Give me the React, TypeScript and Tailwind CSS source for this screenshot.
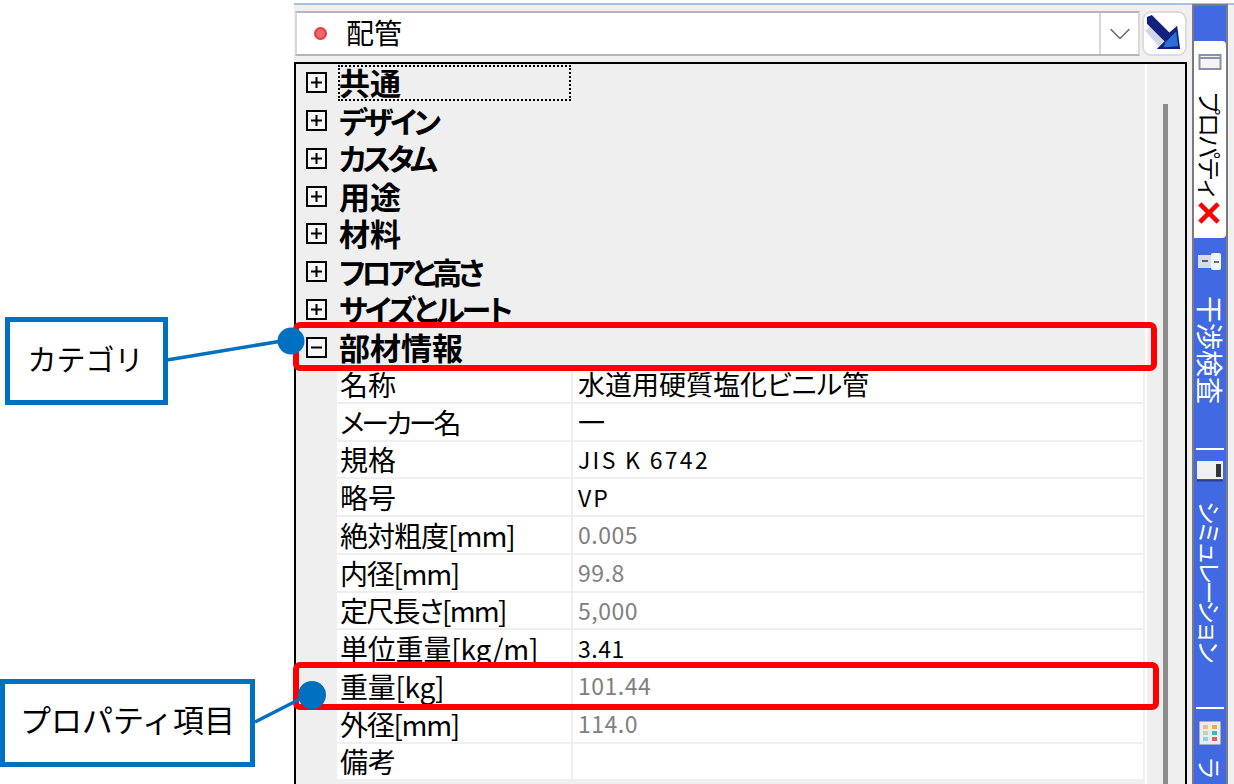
import { ChevronDown } from 'lucide-react';

const categories = [
  { name: '共通', cls: 'text-[31px]' },
  { name: 'デザイン', cls: 'text-[30px] tracking-[-3.5px]' },
  { name: 'カスタム', cls: 'text-[30px] tracking-[-4px]' },
  { name: '用途', cls: 'text-[31px]' },
  { name: '材料', cls: 'text-[31px]' },
  { name: 'フロアと高さ', cls: 'text-[30px] tracking-[-4px]' },
  { name: 'サイズとルート', cls: 'text-[30px] tracking-[-3px]' },
];

const props = [
  { name: '名称', value: '水道用硬質塩化ビニル管', jp: true, valueCls: 'tracking-[0px]' },
  { name: 'メーカー名', value: '一', jp: true, nameCls: 'tracking-[-3px]' },
  { name: '規格', value: 'JIS K 6742', valueCls: 'tracking-[2.3px]' },
  { name: '略号', value: 'VP', valueCls: 'tracking-[2px]' },
  { name: '絶対粗度[mm]', value: '0.005', gray: true, nameCls: 'tracking-[-1px]' },
  { name: '内径[mm]', value: '99.8', gray: true, nameCls: 'tracking-[-1.3px]' },
  { name: '定尺長さ[mm]', value: '5,000', gray: true, nameCls: 'tracking-[-1.75px]' },
  { name: '単位重量[kg/m]', value: '3.41', nameCls: 'tracking-[-0.2px]' },
  { name: '重量[kg]', value: '101.44', gray: true, nameCls: 'tracking-[-0.3px]' },
  { name: '外径[mm]', value: '114.0', gray: true, nameCls: 'tracking-[-1.3px]' },
  { name: '備考', value: '' },
];

function ExpandBox({ open }: { open?: boolean }) {
  return (
    <svg width="21" height="21" viewBox="0 0 21 21" className="ml-[10px] shrink-0">
      <rect x="1" y="1" width="19" height="19" fill="#f8f8f8" stroke="#000" strokeWidth="2" />
      <path d={open ? 'M5 10.5h11' : 'M5 10.5h11M10.5 5v11'} stroke="#000" strokeWidth="2" />
    </svg>
  );
}

function TabIcon({ kind }: { kind: 'window' | 'key' | 'side' | 'grid' }) {
  if (kind === 'window') {
    return (
      <svg width="24" height="18" viewBox="0 0 24 18">
        <rect x="1.5" y="2" width="21" height="14" fill="#f4f4f8" stroke="#8a90a8" strokeWidth="2" />
        <path d="M2 5h20" stroke="#8a90a8" strokeWidth="2" />
      </svg>
    );
  }
  if (kind === 'key') {
    return (
      <svg width="26" height="20" viewBox="0 0 26 20">
        <rect x="1" y="3" width="14" height="13" fill="#d8dce8" />
        <rect x="14" y="1" width="10" height="17" rx="2" fill="#f2f4f8" />
        <path d="M17 10h5" stroke="#6a7080" strokeWidth="2" />
        <path d="M5 9h6" stroke="#5a6070" strokeWidth="2" />
      </svg>
    );
  }
  if (kind === 'side') {
    return (
      <svg width="28" height="22" viewBox="0 0 28 22">
        <rect x="1" y="1" width="26" height="18" fill="#f0f0f0" />
        <rect x="20" y="4" width="5" height="13" fill="#333" />
        <path d="M1 20.5h26" stroke="#2b3f91" strokeWidth="2" />
      </svg>
    );
  }
  return (
    <svg width="24" height="26" viewBox="0 0 24 26">
      <rect x="1" y="1" width="22" height="24" fill="#eceaf0" stroke="#5a6aa8" />
      <rect x="5" y="5" width="5" height="4" fill="#e8c080" />
      <rect x="14" y="5" width="5" height="4" fill="#e8b040" />
      <rect x="5" y="11" width="5" height="4" fill="#b8d8b0" />
      <rect x="14" y="11" width="5" height="4" fill="#30c0c0" />
      <rect x="5" y="17" width="5" height="4" fill="#80d8d8" />
      <rect x="14" y="17" width="5" height="4" fill="#e06060" />
    </svg>
  );
}

function TabLabel({ text, cls }: { text: string; cls: string }) {
  return <span className={`[writing-mode:vertical-rl] [text-orientation:sideways] leading-none whitespace-nowrap ${cls}`}>{text}</span>;
}

export default function App() {
  return (
    <div className="relative flex w-[1234px] h-[784px] overflow-hidden bg-white text-black font-['Noto_Sans_CJK_JP','Liberation_Sans',sans-serif]">
      <div className="w-[294px] shrink-0" />

      {/* パネル本体 */}
      <div className="flex-1 flex flex-col pt-[3px]">
        <div className="h-[2px] bg-[#a9c1de]" />
        <div className="flex-1 flex bg-[#f0f0f0] min-h-0">
          <div className="w-[898px] shrink-0 flex flex-col min-h-0">
            {/* コンボボックス */}
            <div className="flex items-center gap-[2px] mt-[6px] ml-[1px] h-[45px] shrink-0">
              <div className="w-[845px] h-full flex items-center bg-white border-2 border-[#b4b4bc] border-x-[#d8d8d8]">
                <span className="ml-[17px] w-[13px] h-[13px] rounded-full bg-[#e8686c] border-2 border-[#e33a3e]" />
                <span className="ml-[19px] pb-[4px] text-[28px] leading-none">配管</span>
                <div className="ml-auto w-[39px] h-full flex items-center justify-center border-l-2 border-[#d8d8d8]">
                  <ChevronDown size={36} strokeWidth={1} className="text-[#666]" />
                </div>
              </div>
              <div className="w-[45px] h-full flex items-center justify-center rounded-[9px] border-2 border-[#dcdcdc] bg-white">
                <svg width="41" height="41" viewBox="0 0 42 42">
                  <path d="M1 18l5-4 15 14-6 6z" fill="#d0d4ec" />
                  <path d="M3 4l5-2 18 18 8-7 3 24H13l8-8L3 11z" fill="#12207e" />
                  <path d="M22 30l11-11 2 15-15 1z" fill="#2a6fd8" />
                </svg>
              </div>
            </div>

            {/* プロパティグリッド */}
            <div className="relative flex-1 mt-[6px] mr-[5px] border-2 border-black border-b-0 bg-[#efefef] pr-[42px] overflow-hidden [font-feature-settings:'palt']">
              {categories.map((c, i) => (
                <div key={c.name} className="flex items-center h-[37.75px]">
                  <ExpandBox />
                  <span className={`ml-[12px] flex items-center pb-[2px] leading-none font-bold whitespace-nowrap ${c.cls} ${i === 0 ? 'outline-dotted outline-2 outline-black w-[231px] h-[34px] -outline-offset-1' : ''}`}>{c.name}</span>
                </div>
              ))}
              <div className="flex items-center h-[37.75px]">
                <ExpandBox open />
                <span className="ml-[12px] pb-[2px] text-[31px] leading-none font-bold whitespace-nowrap">部材情報</span>
              </div>
              {props.map((p) => (
                <div key={p.name} className="flex gap-[2px] h-[37.75px] ml-[41px] pb-[2px]">
                  <div className={`w-[234px] bg-white pl-[3px] flex items-center text-[28px] leading-none whitespace-nowrap ${p.nameCls ?? ''}`}>{p.name}</div>
                  <div className={`flex-1 bg-white pl-[5px] flex items-center leading-none whitespace-nowrap ${p.jp ? 'text-[27px]' : 'text-[23px]'} ${p.valueCls ?? 'tracking-[0.5px]'} ${p.gray ? 'text-[#808080]' : 'text-black'}`}>{p.value}</div>
                </div>
              ))}
              {/* スクロールバー */}
              <div className="absolute top-[40px] bottom-0 right-[17px] w-[5px] bg-[#8c8c8c]" />
              <div className="absolute top-0 bottom-0 right-[38px] w-[2px] bg-white" />
            </div>
          </div>

          {/* 右のタブ帯 */}
          <div className="w-[36px] shrink-0 mt-[-1px] flex flex-col items-center bg-[#4169e1] border-x-2 border-[#7a7a80] overflow-hidden text-white">
            <div className="h-[2px] w-full bg-[#7a7a80] shrink-0" />
            <div className="mt-[35px] w-full h-[197px] shrink-0 flex flex-col items-center bg-white text-black rounded-r-sm">
              <div className="mt-[12px]"><TabIcon kind="window" /></div>
              <div className="mt-[20px] h-[108px]"><TabLabel text="プロパティ" cls="text-[24px] tracking-[-2px]" /></div>
              <svg width="22" height="22" viewBox="0 0 24 24" className="mt-[3px] mr-[3px]">
                <path d="M2 2l20 20M22 2L2 22" stroke="#ff0000" strokeWidth="5" />
              </svg>
            </div>
            <div className="mt-[14px]"><TabIcon kind="key" /></div>
            <div className="mt-[24px] h-[110px]"><TabLabel text="干渉検査" cls="text-[27px]" /></div>
            <div className="mt-[42px] h-[2px] w-[28px] bg-white shrink-0" />
            <div className="mt-[10px]"><TabIcon kind="side" /></div>
            <div className="mt-[19px] h-[160px]"><TabLabel text="シミュレーション" cls="text-[24px] tracking-[-4px]" /></div>
            <div className="mt-[46px] h-[2px] w-[28px] bg-white shrink-0" />
            <div className="mt-[11px]"><TabIcon kind="grid" /></div>
            <div className="mt-[10px]"><TabLabel text="ラ" cls="text-[24px]" /></div>
          </div>
        </div>
      </div>

      {/* 注釈 */}
      <div className="absolute left-[293px] top-[322px] w-[864px] h-[49px] border-[6px] border-[#ff0000] rounded-[7px]" />
      <div className="absolute left-[293px] top-[662px] w-[866px] h-[48px] border-[6px] border-[#ff0000] rounded-[7px]" />

      <svg width="340" height="100" viewBox="0 0 340 100" className="absolute left-0 top-[320px]">
        <path d="M167 40L282 21" stroke="#0070c0" strokeWidth="3.5" />
        <circle cx="291" cy="21" r="13.5" fill="#0070c0" />
      </svg>
      <svg width="340" height="100" viewBox="0 0 340 100" className="absolute left-0 top-[670px]">
        <path d="M255 52L306 26" stroke="#0070c0" strokeWidth="3.5" />
        <circle cx="312" cy="25" r="14" fill="#0070c0" />
      </svg>

      <div className="absolute left-[5px] top-[317px] w-[163px] h-[88px] pb-[5px] pr-[2px] border-[5px] border-[#0070c0] bg-white flex items-center justify-center text-[29px] leading-none">カテゴリ</div>
      <div className="absolute left-0 top-[679px] w-[255px] h-[88px] pb-[9px] border-[5px] border-[#0070c0] bg-white flex items-center justify-center text-[31px] leading-none">プロパティ項目</div>
    </div>
  );
}
